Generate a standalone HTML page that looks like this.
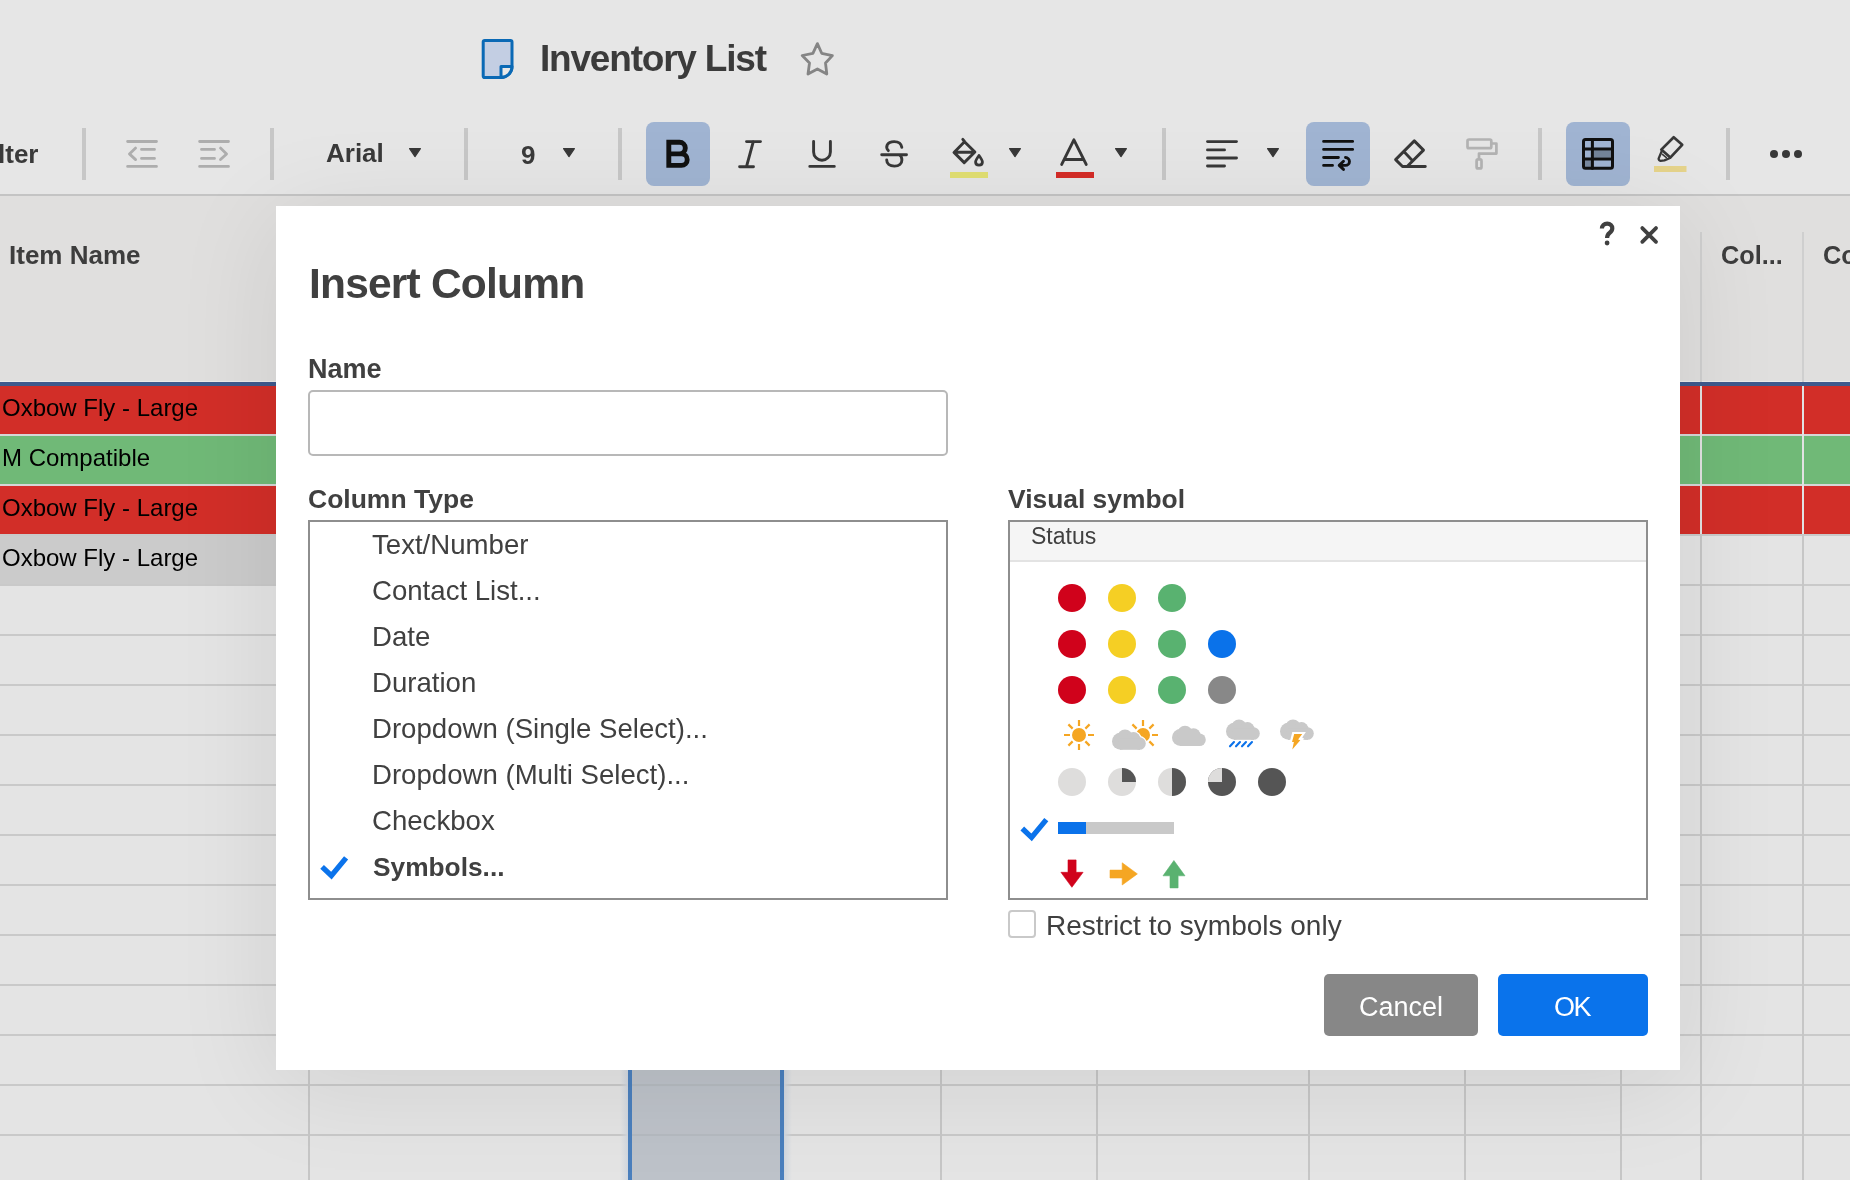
<!DOCTYPE html>
<html><head><meta charset="utf-8"><title>Insert Column</title><style>
*{margin:0;padding:0;box-sizing:border-box}
html,body{width:1850px;height:1180px;overflow:hidden}
body{position:relative;background:#e3e3e3;font-family:"Liberation Sans",sans-serif}
.t{position:absolute;white-space:nowrap;will-change:transform}
.r{position:absolute}
svg{position:absolute;overflow:visible}
</style></head><body>
<div class="r" style="left:0px;top:0px;width:1850px;height:194px;background:#e6e6e6;"></div>
<div class="r" style="left:0px;top:194px;width:1850px;height:2px;background:#c4c4c4;"></div>
<div class="r" style="left:0px;top:196px;width:1850px;height:984px;background:#e4e4e4;"></div>
<div class="r" style="left:0px;top:196px;width:1850px;height:185px;background:#e0dfde;"></div>
<div class="r" style="left:0px;top:381px;width:1850px;height:1px;background:#ebebeb;"></div>
<div class="r" style="left:0px;top:382px;width:1850px;height:4px;background:#3f5a8d;"></div>
<div class="r" style="left:1700px;top:232px;width:2px;height:150px;background:#cfcfcf;"></div>
<div class="r" style="left:1802px;top:232px;width:2px;height:150px;background:#cfcfcf;"></div>
<div class="t" style="left:9px;top:241.99px;font-size:26px;line-height:26px;color:#3d3d3d;font-weight:700;">Item Name</div>
<div class="t" style="left:1721px;top:242.58px;font-size:25.3px;line-height:25.3px;color:#3d3d3d;font-weight:700;">Col...</div>
<div class="t" style="left:1822.5px;top:242.58px;font-size:25.3px;line-height:25.3px;color:#3d3d3d;font-weight:700;">Col...</div>
<div class="r" style="left:0px;top:386px;width:1850px;height:48px;background:#d22e28;"></div>
<div class="r" style="left:0px;top:434px;width:1850px;height:2px;background:#d6d6d6;"></div>
<div class="r" style="left:0px;top:436px;width:1850px;height:48px;background:#70b977;"></div>
<div class="r" style="left:0px;top:484px;width:1850px;height:2px;background:#d6d6d6;"></div>
<div class="r" style="left:0px;top:486px;width:1850px;height:48px;background:#d22e28;"></div>
<div class="r" style="left:0px;top:534px;width:1850px;height:2px;background:#c9c9c9;"></div>
<div class="r" style="left:0px;top:536px;width:600px;height:48px;background:#cbcbcb;"></div>
<div class="r" style="left:0px;top:584px;width:1850px;height:2px;background:#c9c9c9;"></div>
<div class="r" style="left:0px;top:634px;width:1850px;height:2px;background:#c9c9c9;"></div>
<div class="r" style="left:0px;top:684px;width:1850px;height:2px;background:#c9c9c9;"></div>
<div class="r" style="left:0px;top:734px;width:1850px;height:2px;background:#c9c9c9;"></div>
<div class="r" style="left:0px;top:784px;width:1850px;height:2px;background:#c9c9c9;"></div>
<div class="r" style="left:0px;top:834px;width:1850px;height:2px;background:#c9c9c9;"></div>
<div class="r" style="left:0px;top:884px;width:1850px;height:2px;background:#c9c9c9;"></div>
<div class="r" style="left:0px;top:934px;width:1850px;height:2px;background:#c9c9c9;"></div>
<div class="r" style="left:0px;top:984px;width:1850px;height:2px;background:#c9c9c9;"></div>
<div class="r" style="left:0px;top:1034px;width:1850px;height:2px;background:#c9c9c9;"></div>
<div class="r" style="left:0px;top:1084px;width:1850px;height:2px;background:#c9c9c9;"></div>
<div class="r" style="left:0px;top:1134px;width:1850px;height:2px;background:#c9c9c9;"></div>
<div class="r" style="left:0px;top:1184px;width:1850px;height:2px;background:#c9c9c9;"></div>
<div class="t" style="left:2px;top:395.68px;font-size:24px;line-height:24px;color:#000;">Oxbow Fly - Large</div>
<div class="t" style="left:2px;top:445.68px;font-size:24px;line-height:24px;color:#000;">M Compatible</div>
<div class="t" style="left:2px;top:495.68px;font-size:24px;line-height:24px;color:#000;">Oxbow Fly - Large</div>
<div class="t" style="left:2px;top:545.68px;font-size:24px;line-height:24px;color:#000;">Oxbow Fly - Large</div>
<div class="r" style="left:308px;top:386px;width:2px;height:794px;background:#c6c6c6;"></div>
<div class="r" style="left:940px;top:386px;width:2px;height:794px;background:#c6c6c6;"></div>
<div class="r" style="left:1096px;top:386px;width:2px;height:794px;background:#c6c6c6;"></div>
<div class="r" style="left:1308px;top:386px;width:2px;height:794px;background:#c6c6c6;"></div>
<div class="r" style="left:1464px;top:386px;width:2px;height:794px;background:#c6c6c6;"></div>
<div class="r" style="left:1620px;top:386px;width:2px;height:794px;background:#c6c6c6;"></div>
<div class="r" style="left:1700px;top:386px;width:2px;height:794px;background:#c6c6c6;"></div>
<div class="r" style="left:1802px;top:386px;width:2px;height:794px;background:#c6c6c6;"></div>
<div class="r" style="left:1700px;top:386px;width:2px;height:148px;background:#e2e2e2;"></div>
<div class="r" style="left:1802px;top:386px;width:2px;height:148px;background:#e2e2e2;"></div>
<div class="r" style="left:620px;top:386px;width:172px;height:794px;background:linear-gradient(90deg,rgba(205,214,226,0) 0,#d0d6de 8px,#d0d6de 164px,rgba(205,214,226,0) 172px);"></div>
<div class="r" style="left:628px;top:386px;width:156px;height:794px;background:#bdc2c9;"></div>
<div class="r" style="left:628px;top:386px;width:4px;height:794px;background:#4a7fbd;"></div>
<div class="r" style="left:780px;top:386px;width:4px;height:794px;background:#4a7fbd;"></div>
<div class="r" style="left:632px;top:434px;width:148px;height:2px;background:#b5bac0;"></div>
<div class="r" style="left:632px;top:484px;width:148px;height:2px;background:#b5bac0;"></div>
<div class="r" style="left:632px;top:534px;width:148px;height:2px;background:#b5bac0;"></div>
<div class="r" style="left:632px;top:584px;width:148px;height:2px;background:#b5bac0;"></div>
<div class="r" style="left:632px;top:634px;width:148px;height:2px;background:#b5bac0;"></div>
<div class="r" style="left:632px;top:684px;width:148px;height:2px;background:#b5bac0;"></div>
<div class="r" style="left:632px;top:734px;width:148px;height:2px;background:#b5bac0;"></div>
<div class="r" style="left:632px;top:784px;width:148px;height:2px;background:#b5bac0;"></div>
<div class="r" style="left:632px;top:834px;width:148px;height:2px;background:#b5bac0;"></div>
<div class="r" style="left:632px;top:884px;width:148px;height:2px;background:#b5bac0;"></div>
<div class="r" style="left:632px;top:934px;width:148px;height:2px;background:#b5bac0;"></div>
<div class="r" style="left:632px;top:984px;width:148px;height:2px;background:#b5bac0;"></div>
<div class="r" style="left:632px;top:1034px;width:148px;height:2px;background:#b5bac0;"></div>
<div class="r" style="left:632px;top:1084px;width:148px;height:2px;background:#b5bac0;"></div>
<div class="r" style="left:632px;top:1134px;width:148px;height:2px;background:#b5bac0;"></div>
<div class="r" style="left:632px;top:1184px;width:148px;height:2px;background:#b5bac0;"></div>
<!--toolbar-->
<div class="t" style="left:-2.5px;top:141.49px;font-size:26px;line-height:26px;color:#3a3a3a;font-weight:700;">lter</div>
<div class="t" style="left:326px;top:139.99px;font-size:26px;line-height:26px;color:#3a3a3a;font-weight:700;">Arial</div>
<div class="t" style="left:521px;top:141.99px;font-size:26px;line-height:26px;color:#3a3a3a;font-weight:700;">9</div>
<div class="r" style="left:82px;top:128px;width:4px;height:52px;background:#c7c7c7;"></div>
<div class="r" style="left:270px;top:128px;width:4px;height:52px;background:#c7c7c7;"></div>
<div class="r" style="left:464px;top:128px;width:4px;height:52px;background:#c7c7c7;"></div>
<div class="r" style="left:618px;top:128px;width:4px;height:52px;background:#c7c7c7;"></div>
<div class="r" style="left:1162px;top:128px;width:4px;height:52px;background:#c7c7c7;"></div>
<div class="r" style="left:1538px;top:128px;width:4px;height:52px;background:#c7c7c7;"></div>
<div class="r" style="left:1726px;top:128px;width:4px;height:52px;background:#c7c7c7;"></div>
<div class="r" style="left:646px;top:122px;width:64px;height:64px;background:#a0b4d2;border-radius:8px;"></div>
<div class="r" style="left:1306px;top:122px;width:64px;height:64px;background:#a0b4d2;border-radius:8px;"></div>
<div class="r" style="left:1566px;top:122px;width:64px;height:64px;background:#a0b4d2;border-radius:8px;"></div>
<svg style="left:0;top:0" width="1850" height="200" viewBox="0 0 1850 200">
<g fill="none" stroke-linecap="round" stroke-linejoin="round">
<!-- doc icon -->
<path d="M483.2 42 q0-1.6 1.6-1.6 h25.6 q1.6 0 1.6 1.6 v24.5 a11 11 0 0 1 -11 11 h-16.2 q-1.6 0-1.6-1.6 z" fill="#c3cee3" stroke="#0a69b5" stroke-width="3"/>
<path d="M501 77.5 v-11 h11 a11 11 0 0 1 -11 11z" fill="#e8e8e8" stroke="#0a69b5" stroke-width="3"/>
<!-- star -->
<path d="M817.4 43.6 L821.7 53.3 L832.4 55.6 L825.5 63 L826.8 74 L817.4 68.9 L808 74 L809.5 63 L802.2 55.5 L812.9 53.3 Z" stroke="#858585" stroke-width="2.8"/>
<!-- outdent -->
<g stroke="#adadad" stroke-width="2.8">
<path d="M127.6 141.5 H156.5 M141.5 149.4 H154.5 M141.5 158.4 H154.5 M127.6 166.4 H156.5 M135.6 148.1 L129.4 153.9 L135.6 159.6"/>
<path d="M199.6 141.5 H228.5 M201.5 149.4 H214.5 M201.5 158.4 H214.5 M199.6 166.4 H228.5 M220.5 148.1 L226.6 153.9 L220.5 159.6"/>
</g>
<!-- B -->
<path d="M668.8 142.3 H679.5 a5.8 5.8 0 0 1 0 11.6 H668.8 Z M668.8 153.9 H681.45 a5.75 5.75 0 0 1 0 11.5 H668.8 Z" stroke="#111" stroke-width="4.9" stroke-linejoin="miter"/>
<!-- I -->
<path d="M746.5 141.6 H760.5 M739.6 166.7 H753.5 M753.3 141.6 L746.5 166.7" stroke="#383838" stroke-width="2.9"/>
<!-- U -->
<path d="M813.6 141.4 V151.9 a8.4 8.4 0 0 0 16.8 0 V141.4 M809.8 166.4 H834.3" stroke="#383838" stroke-width="2.9"/>
<!-- S -->
<path d="M888.3 150.6 C885.3 147.5 886.5 141.6 894.2 141.6 C899 141.6 901.3 144.2 901.8 147.3 M886.7 160 C886.7 163.6 889.6 166.1 894.4 166.1 C899.2 166.1 901.9 163.5 901.9 159.9 C901.9 157.6 901 156 899.5 154.9 M881.7 154.8 H906.5" stroke="#383838" stroke-width="2.9"/>
<!-- paint bucket -->
<path d="M962.8 139.4 L964.5 141.5 M964.5 141.7 L974.9 152 L964.2 162.6 L954 152.4 Z M954.5 152.2 H974.5" stroke="#383838" stroke-width="2.9"/>
<path d="M979 155.5 C976.5 159 975.6 160.5 975.6 162 C975.6 164 977.2 165.1 979 165.1 C980.8 165.1 982.4 164 982.4 162 C982.4 160.5 981.5 159 979 155.5 Z" stroke="#383838" stroke-width="2.8"/>
<rect x="950" y="172" width="38" height="6" fill="#e1df72"/>
<!-- A -->
<path d="M1061.7 164.4 L1073.9 139.8 L1086.2 164.4 M1065.6 159.5 H1082.3" stroke="#383838" stroke-width="2.9"/>
<rect x="1056" y="172" width="38" height="6" fill="#d42c27"/>
<!-- align left -->
<path d="M1207.5 141.6 H1236.5 M1207.5 149.9 H1224.5 M1207.5 158 H1236.5 M1207.5 166 H1224.5" stroke="#383838" stroke-width="2.9"/>
<!-- wrap -->
<path d="M1323.6 141.4 H1352.6 M1323.6 149.4 H1352.6 M1323.6 157.5 H1338.4 M1323.6 165.4 H1332.5 M1345.5 157.5 a3.95 3.95 0 0 1 0 7.9 H1339.5 M1343.5 161.2 L1339.2 165.4 L1343.5 169.4" stroke="#111" stroke-width="2.9"/>
<!-- eraser -->
<path d="M1425.3 166.5 H1402.5 L1395.6 159.6 L1414.3 140.9 L1423.5 150.1 L1407.1 166.5 M1404.3 152.1 L1411.6 159.7" stroke="#383838" stroke-width="2.9"/>
<!-- roller -->
<g stroke="#b3b3b3" stroke-width="2.7">
<rect x="1467.5" y="139.5" width="23.8" height="8.7" rx="1.5"/>
<path d="M1491.5 143.5 H1496.4 V153.6 H1479 V158.5"/>
<rect x="1476.6" y="159.4" width="4.9" height="9" rx="1.5"/>
</g>
<!-- grid -->
<rect x="1594" y="150.3" width="17.6" height="7.2" fill="#74859a"/>
<rect x="1585" y="160.2" width="6.2" height="7.6" fill="#7a8aa0"/>
<rect x="1583.5" y="139.6" width="29" height="28.6" rx="2" stroke="#111" stroke-width="3"/>
<path d="M1592.4 139.6 V168.2 M1583.5 149 H1612.5 M1583.5 158.9 H1612.5" stroke="#111" stroke-width="3"/>
<!-- highlighter -->
<path d="M1661.3 149.6 L1673.7 137.2 L1682.2 144.8 L1670.3 157.6 Z" stroke="#383838" stroke-width="2.7"/><path d="M1661.8 151 L1658.6 158.6 Q1658.6 160.6 1660.5 160.9 L1664.4 160.4 L1669.5 158.2" stroke="#383838" stroke-width="2.3"/><path d="M1662.4 154.4 L1666.4 157.6" stroke="#383838" stroke-width="1.5"/>
<rect x="1654" y="166" width="32.5" height="6" fill="#e5d38b"/>
<!-- dots -->
<circle cx="1774" cy="154" r="4" fill="#383838"/>
<circle cx="1786" cy="154" r="4" fill="#383838"/>
<circle cx="1798" cy="154" r="4" fill="#383838"/>
<!-- triangles -->
<g fill="#383838" stroke="#383838" stroke-width="1.2">
<path d="M409.6 148.6 H420.4 L415 156.6 Z"/>
<path d="M563.6 148.6 H574.4 L569 156.6 Z"/>
<path d="M1009.6 148.6 H1020.4 L1015 156.6 Z"/>
<path d="M1115.6 148.6 H1126.4 L1121 156.6 Z"/>
<path d="M1267.6 148.6 H1278.4 L1273 156.6 Z"/>
</g>
</g>
</svg>
<div class="t" style="left:540px;top:39.67px;font-size:37px;line-height:37px;color:#3b3b3b;font-weight:700;letter-spacing:-1.2px;">Inventory List</div>
<div class="r" style="left:276px;top:206px;width:1404px;height:864px;background:#fff;box-shadow:0 14px 100px rgba(0,0,0,0.09)"></div>
<div class="t" style="left:309px;top:262.52px;font-size:42.5px;line-height:42.5px;color:#404040;font-weight:700;letter-spacing:-0.8px;">Insert Column</div>
<div class="t" style="left:308px;top:356.14px;font-size:27px;line-height:27px;color:#404040;font-weight:700;">Name</div>
<div class="r" style="left:308px;top:390px;width:640px;height:66px;border:2px solid #b8b8b8;border-radius:5px"></div>
<div class="t" style="left:308px;top:485.56px;font-size:26.5px;line-height:26.5px;color:#404040;font-weight:700;">Column Type</div>
<div class="r" style="left:308px;top:520px;width:640px;height:380px;border:2px solid #8e8e8e"></div>
<div class="t" style="left:372px;top:530.63px;font-size:27.6px;line-height:27.6px;color:#404040;">Text/Number</div>
<div class="t" style="left:372px;top:576.63px;font-size:27.6px;line-height:27.6px;color:#404040;">Contact List...</div>
<div class="t" style="left:372px;top:622.63px;font-size:27.6px;line-height:27.6px;color:#404040;">Date</div>
<div class="t" style="left:372px;top:668.63px;font-size:27.6px;line-height:27.6px;color:#404040;">Duration</div>
<div class="t" style="left:372px;top:714.63px;font-size:27.6px;line-height:27.6px;color:#404040;">Dropdown (Single Select)...</div>
<div class="t" style="left:372px;top:760.63px;font-size:27.6px;line-height:27.6px;color:#404040;">Dropdown (Multi Select)...</div>
<div class="t" style="left:372px;top:806.63px;font-size:27.6px;line-height:27.6px;color:#404040;">Checkbox</div>
<div class="t" style="left:373px;top:853.73px;font-size:26.3px;line-height:26.3px;color:#404040;font-weight:700;">Symbols...</div>
<div class="t" style="left:1008px;top:485.65px;font-size:26.4px;line-height:26.4px;color:#404040;font-weight:700;">Visual symbol</div>
<div class="r" style="left:1008px;top:520px;width:640px;height:380px;border:2px solid #8e8e8e"></div>
<div class="r" style="left:1010px;top:522px;width:636px;height:38px;background:#f5f5f5;"></div>
<div class="r" style="left:1010px;top:560px;width:636px;height:2px;background:#e3e3e3;"></div>
<div class="t" style="left:1031px;top:524.53px;font-size:23px;line-height:23px;color:#404040;">Status</div>
<div class="r" style="left:1008px;top:910px;width:28px;height:28px;border:2px solid #c9c9c9;border-radius:4px"></div>
<div class="t" style="left:1046px;top:912.29px;font-size:28px;line-height:28px;color:#404040;">Restrict to symbols only</div>
<div class="r" style="left:1324px;top:974px;width:154px;height:62px;background:#878787;border-radius:5px"></div>
<div class="t" style="left:1359px;top:994.14px;font-size:27px;line-height:27px;color:#fff;">Cancel</div>
<div class="r" style="left:1498px;top:974px;width:150px;height:62px;background:#0a73eb;border-radius:5px"></div>
<div class="t" style="left:1554px;top:993.64px;font-size:27px;line-height:27px;color:#fff;letter-spacing:-1.5px;">OK</div>
<svg style="left:0;top:200px" width="1850" height="900" viewBox="0 200 1850 900">
<defs>
<g id="cl"><circle cx="8.5" cy="-8.5" r="8.5"/><circle cx="13" cy="-12.5" r="7.7"/><circle cx="21.5" cy="-10.7" r="7"/><circle cx="27.5" cy="-6.3" r="6.3"/><rect x="8" y="-11" width="20" height="11"/></g>
</defs>
<g fill="none">
<!-- help & close -->
<path d="M1601.9 228.6 C1601.9 225.5 1604.1 223.6 1607.2 223.6 C1610.3 223.6 1612.3 225.7 1612.3 228.3 C1612.3 230.6 1611 231.9 1609.5 233 C1607.8 234.3 1607.1 235.3 1607.1 237.9" stroke="#404040" stroke-width="4.2"/>
<circle cx="1607.1" cy="243" r="2.4" fill="#404040"/>
<path d="M1642.3 228.1 L1656 241.8 M1656 228.1 L1642.3 241.8" stroke="#404040" stroke-width="3.8" stroke-linecap="round"/>
<!-- checkmarks -->
<path d="M322.1 866.8 L331.4 875.7 L346.1 857.9" stroke="#0b73eb" stroke-width="5.3"/>
<path d="M1022.3 828.5 L1031.6 837.4 L1046.3 819.6" stroke="#0b73eb" stroke-width="5.3"/>
</g>
<!-- circles -->
<g>
<circle cx="1072" cy="598" r="14" fill="#d0021b"/><circle cx="1122" cy="598" r="14" fill="#f5cf24"/><circle cx="1172" cy="598" r="14" fill="#59b270"/>
<circle cx="1072" cy="644" r="14" fill="#d0021b"/><circle cx="1122" cy="644" r="14" fill="#f5cf24"/><circle cx="1172" cy="644" r="14" fill="#59b270"/><circle cx="1222" cy="644" r="14" fill="#0a72ea"/>
<circle cx="1072" cy="690" r="14" fill="#d0021b"/><circle cx="1122" cy="690" r="14" fill="#f5cf24"/><circle cx="1172" cy="690" r="14" fill="#59b270"/><circle cx="1222" cy="690" r="14" fill="#888888"/>
</g>
<!-- weather -->
<g stroke="#f5a623" stroke-width="2.2" fill="none">
<path d="M1079 720 V726 M1079 744 V750 M1064 735 H1070 M1088 735 H1094 M1068.4 724.4 L1072.64 728.64 M1085.36 741.36 L1089.6 745.6 M1089.6 724.4 L1085.36 728.64 M1072.64 741.36 L1068.4 745.6"/>
<path d="M1143 720 V726 M1152 735 H1158 M1132.4 724.4 L1136.64 728.64 M1149.36 741.36 L1153.6 745.6 M1153.6 724.4 L1149.36 728.64"/>
</g>
<circle cx="1079" cy="735" r="7" fill="#f5a623"/>
<circle cx="1143" cy="735" r="7" fill="#f5a623"/>
<use href="#cl" x="1112" y="749.8" fill="#c9c9c9" stroke="#fff" stroke-width="2.4"/>
<use href="#cl" x="1112" y="749.8" fill="#c9c9c9"/>
<use href="#cl" x="1172" y="746" fill="#c9c9c9"/>
<use href="#cl" x="1226" y="739.8" fill="#c9c9c9"/>
<path d="M1230 746.3 L1234 742 M1236 746.3 L1240 742 M1242 746.3 L1246 742 M1248 746.3 L1252 742" stroke="#0b72ea" stroke-width="2.1" stroke-linecap="round"/>
<use href="#cl" x="1280" y="739.8" fill="#c9c9c9"/>
<path d="M1292.3 732.1 L1305.9 732.1 L1302.2 737.6 L1304 738.6 L1303 740.2 L1290.2 740.2 Z" fill="#fff"/>
<path d="M1294.2 734 L1302.2 734 L1298.1 739.5 L1300.3 740.3 L1292.3 749.4 L1293.9 741.9 L1292 741.9 Z" fill="#f5a623"/>
<!-- harvey balls -->
<circle cx="1072" cy="782" r="14" fill="#dedddc"/>
<circle cx="1122" cy="782" r="14" fill="#dedddc"/><path d="M1122 782 V768 A14 14 0 0 1 1136 782 Z" fill="#555"/>
<circle cx="1172" cy="782" r="14" fill="#dedddc"/><path d="M1172 768 A14 14 0 0 1 1172 796 Z" fill="#555"/>
<circle cx="1222" cy="782" r="14" fill="#555"/><path d="M1222 782 H1208 A14 14 0 0 1 1222 768 Z" fill="#dedddc"/>
<circle cx="1272" cy="782" r="14" fill="#555"/>
<!-- progress -->
<rect x="1058" y="822" width="116" height="12" fill="#c9c9c9"/>
<rect x="1058" y="822" width="28" height="12" fill="#0a72ea"/>
<!-- arrows -->
<path d="M1068 859.9 H1076.1 V872.3 H1083.1 L1071.9 887.3 L1060.9 872.3 H1068 Z" fill="#d0021b" stroke="#d0021b" stroke-width="0.6" stroke-linejoin="round"/>
<path d="M1110 870.1 H1122.2 V862.8 L1137.4 873.9 L1122.2 885 V878 H1110 Z" fill="#f5a623" stroke="#f5a623" stroke-width="0.6" stroke-linejoin="round"/>
<path d="M1173.9 860.5 L1185 875.8 H1178.1 V887.9 H1170 V875.8 H1163 Z" fill="#5ab270" stroke="#5ab270" stroke-width="0.6" stroke-linejoin="round"/>
</svg>
</body></html>
